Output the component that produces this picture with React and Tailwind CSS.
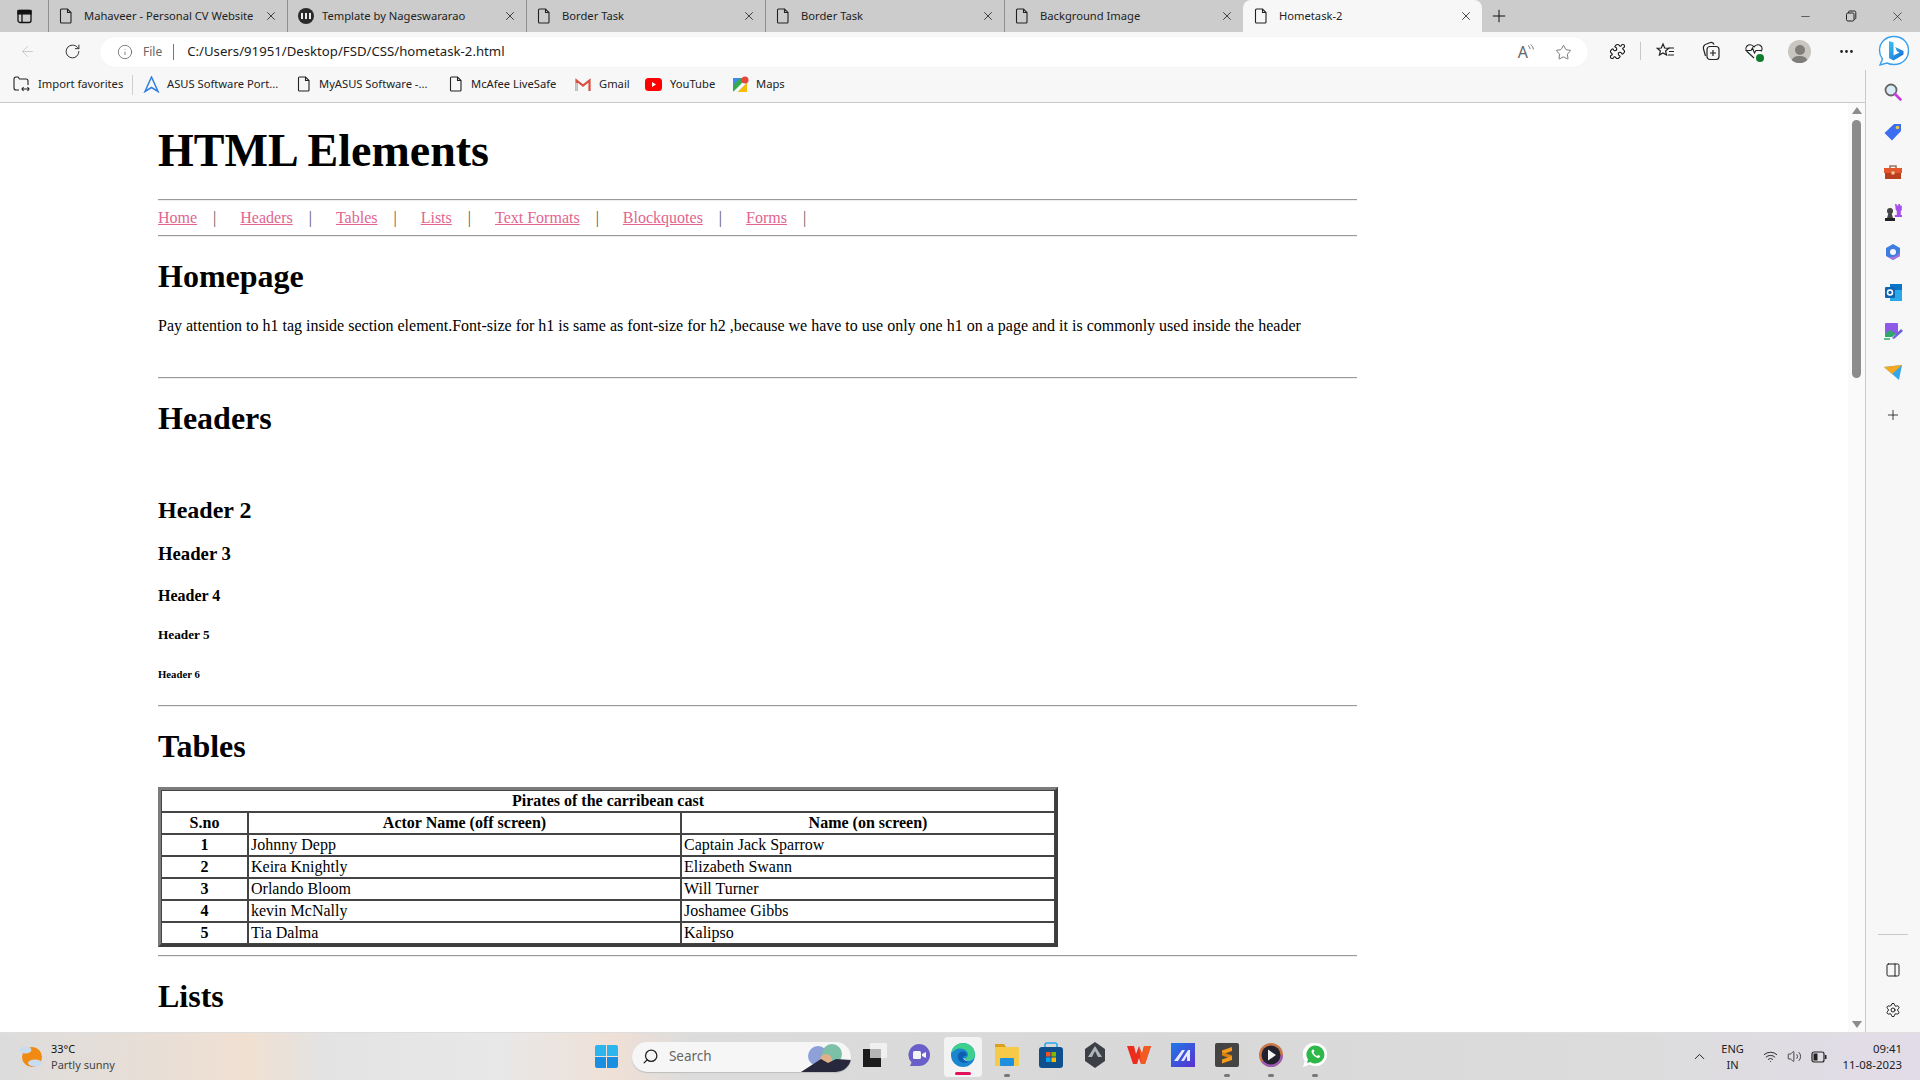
import React from "react";
import {
  ArrowLeft,
  RotateCw,
  Info,
  Star,
  Puzzle,
  Plus,
  Minus,
  X,
  Settings,
  ChevronUp,
  Wifi,
  Volume2,
  MoreHorizontal,
  Search,
  PanelRight,
} from "lucide-react";

const tabs = [
  { title: "Mahaveer - Personal CV Website", icon: "doc" },
  { title: "Template by Nageswararao", icon: "dark" },
  { title: "Border Task", icon: "doc" },
  { title: "Border Task", icon: "doc" },
  { title: "Background Image", icon: "doc" },
  { title: "Hometask-2", icon: "doc", active: true },
];

const navLinks = ["Home", "Headers", "Tables", "Lists", "Text Formats", "Blockquotes", "Forms"];

const cast = [
  ["1", "Johnny Depp", "Captain Jack Sparrow"],
  ["2", "Keira Knightly", "Elizabeth Swann"],
  ["3", "Orlando Bloom", "Will Turner"],
  ["4", "kevin McNally", "Joshamee Gibbs"],
  ["5", "Tia Dalma", "Kalipso"],
];

const DocIcon = () => (
  <svg width="14" height="16" viewBox="0 0 14 16" fill="none" stroke="#222" strokeWidth="1.1" className="shrink-0">
    <path d="M2.5 1h6l3.5 3.5V14a1 1 0 0 1-1 1H2.5a1 1 0 0 1-1-1V2a1 1 0 0 1 1-1z" />
    <path d="M8.5 1v3.5H12" />
  </svg>
);

const DarkTabIcon = () => (
  <svg width="16" height="16" viewBox="0 0 16 16" className="shrink-0">
    <circle cx="8" cy="8" r="8" fill="#2a2a2a" />
    <rect x="3" y="5" width="2" height="6" fill="#eee" />
    <rect x="7" y="5" width="2" height="6" fill="#eee" />
    <rect x="11" y="5" width="2" height="6" fill="#eee" />
  </svg>
);

const Tab = ({ title, icon, active }) => (
  <div
    className={`w-[239px] h-8 flex items-center pr-[9px] shrink-0 relative ${
      active ? "bg-[#f7f7f7] rounded-t-lg pl-[11px]" : "border-l border-[#8f8f8f] pl-[10px]"
    }`}
  >
    {icon === "doc" ? <DocIcon /> : <DarkTabIcon />}
    <span className={`flex-1 overflow-hidden whitespace-nowrap text-[11.2px] text-[#222] ${icon === "doc" ? "ml-[11px]" : "ml-[8px]"}`}>
      {title}
    </span>
    <X size={14} strokeWidth={1.4} color="#222" className="shrink-0 ml-2" />
  </div>
);

const Bookmark = ({ icon, label, className }) => (
  <div className={`flex items-center shrink-0 ${className || ""}`}>
    {icon}
    <span className="text-[11.2px] text-[#222] whitespace-nowrap">{label}</span>
  </div>
);

const Hr = ({ className }) => <hr className={`border-0 border-t border-b border-t-[#9a9a9a] border-b-[#eeeeee] ${className}`} />;

const SideIcon = ({ children }) => <div className="h-10 flex items-center justify-center">{children}</div>;

const TaskIcon = ({ children, dot, active }) => (
  <div className="relative w-[44px] h-12 flex items-center justify-center shrink-0">
    {active && <div className="absolute left-[3px] right-[3px] top-[4px] bottom-[4px] bg-[#f3f3f3] rounded" />}
    <div className="relative -mt-[3px]">{children}</div>
    {dot && <div className="absolute bottom-[4px] left-[19px] w-[6px] h-[3px] rounded-full bg-[#777]" />}
    {active && <div className="absolute bottom-[6px] left-[14px] w-[16px] h-[3px] rounded bg-[#e0125c]" />}
  </div>
);

export default function App() {
  return (
    <div className="w-[1920px] h-[1080px] overflow-hidden flex flex-col bg-white font-['Noto_Sans',sans-serif]">
      {/* tab strip */}
      <div className="h-8 bg-[#cccccc] flex items-center shrink-0">
        <div className="w-12 flex justify-center">
          <svg width="15" height="15" viewBox="0 0 15 15" fill="none" stroke="#111" strokeWidth="1.3">
            <rect x="1" y="1.5" width="13" height="12" rx="2" />
            <rect x="1" y="1.5" width="13" height="3.4" fill="#111" />
            <path d="M5 4v9" />
          </svg>
        </div>
        {tabs.map((tab, i) => (
          <Tab key={i} {...tab} />
        ))}
        <Plus size={20} strokeWidth={1.2} color="#111" className="ml-[7px]" />
        <div className="ml-auto flex items-center pr-[15px] gap-[33px]">
          <Minus size={13} strokeWidth={1.2} color="#222" />
          <svg width="12" height="12" viewBox="0 0 12 12" fill="none" stroke="#222" strokeWidth="1">
            <rect x="1.5" y="3" width="7.5" height="8" rx="1.4" />
            <path d="M3.5 3V2.2A1.2 1.2 0 0 1 4.7 1h4.6a1.5 1.5 0 0 1 1.5 1.5v5.2A1.2 1.2 0 0 1 9 9" />
          </svg>
          <X size={15} strokeWidth={1.1} color="#222" />
        </div>
      </div>

      {/* address bar */}
      <div className="h-[38px] bg-[#f7f7f7] flex items-center shrink-0 relative">
        <ArrowLeft size={17} strokeWidth={1.2} color="#c4c4c4" className="ml-[19px]" />
        <RotateCw size={17} strokeWidth={1.4} color="#333" className="ml-[28px]" />
        <div className="ml-[19px] mt-[2px] w-[1488px] h-[30px] bg-white rounded-full flex items-center shadow-[0_0_1px_#e4e4e4]">
          <Info size={16} strokeWidth={1.1} color="#555" className="ml-[17px]" />
          <span className="ml-[10px] text-[12px] text-[#666]">File</span>
          <div className="ml-[11px] w-px h-[16px] bg-[#777]" />
          <span className="ml-[13px] text-[13.2px] text-[#1c1c1c]">C:/Users/91951/Desktop/FSD/CSS/hometask-2.html</span>
          <div className="ml-auto flex items-center pr-[16px] gap-[21px]">
            <div className="flex items-start">
              <span className="text-[16px] text-[#666] leading-none">A</span>
              <svg width="7" height="9" viewBox="0 0 7 9" fill="none" stroke="#666" strokeWidth="0.9" className="-ml-[1px]">
                <path d="M1 1.500c1.500 1 2 2 2 3.500M3.500 0.500c1.800 1.200 2.800 3 2.800 5" />
              </svg>
            </div>
            <Star size={17} strokeWidth={1.1} color="#555" />
          </div>
        </div>
        <Puzzle size={17} strokeWidth={1.5} color="#111" className="ml-[21px]" />
        <div className="ml-[14px] w-px h-[18px] bg-[#c8c8c8]" />
        <div className="ml-[15px]">
          <svg width="20" height="18" viewBox="0 0 20 18" fill="none" stroke="#222" strokeWidth="1.2">
            <path d="M7 2l1.700 4 4.100.3-3.200 2.700 1 4.100L7 10.900 3.400 13.100l1-4.100-3.200-2.700 4.100-.3z" />
            <path d="M12.500 6H18M13 9.500h5M12 13h6" />
          </svg>
        </div>
        <div className="ml-[25px]">
          <svg width="20" height="20" viewBox="0 0 20 20" fill="none" stroke="#222" strokeWidth="1.2">
            <rect x="6" y="5.500" width="12" height="13" rx="3" />
            <path d="M4.500 15L2.500 8a4 4 0 0 1 3-5l4-1.500A3 3 0 0 1 13 3.500M12 9v6M9 12h6" />
          </svg>
        </div>
        <div className="ml-[23px] relative">
          <svg width="20" height="18" viewBox="0 0 20 18" fill="none" stroke="#222" strokeWidth="1.1">
            <path d="M10 16L3 9.500a4 4 0 0 1 6-5.500l1 1 1-1a4 4 0 0 1 6 5.500" />
            <path d="M1.500 8.500H7l1.500-2.500 2 5 1.500-2.500h5" />
          </svg>
          <div className="absolute right-[0px] bottom-[-2px] w-[8px] h-[8px] rounded-full bg-[#0f7b2f]" />
        </div>
        <div className="ml-[24px] w-[23px] h-[23px] rounded-full bg-[#c9c6c2] flex flex-col items-center justify-end overflow-hidden">
          <div className="w-[10px] h-[10px] rounded-full bg-[#7f7d7a]" />
          <div className="mt-[1px] w-[17px] h-[7px] rounded-t-full bg-[#7f7d7a]" />
        </div>
        <MoreHorizontal size={17} strokeWidth={2} color="#222" className="ml-[27px]" />
        <div className="ml-[23px]">
          <svg width="32" height="32" viewBox="0 0 32 32">
            <defs>
              <linearGradient id="bingGrad" x1="0" y1="0" x2="1" y2="1">
                <stop offset="0" stopColor="#39c4f5" />
                <stop offset="1" stopColor="#1565d8" />
              </linearGradient>
            </defs>
            <path d="M16 1.500c8.500 0 14.500 6 14.500 14s-6 14-14.500 14c-2.500 0-5-.5-7-1.500L2 30l2.500-6C2.500 21.500 1.500 19 1.500 15.500c0-8 6-14 14.500-14z" fill="#fff" stroke="#3aa0ee" strokeWidth="1.400" />
            <path d="M11 6l4.500 1.500v13l6-3-2.500-1.200-1.800-4.300 8.300 4v3.500L15.500 25.500 11 23z" fill="url(#bingGrad)" />
          </svg>
        </div>
      </div>

      <div className="flex-1 min-h-0 flex">
        <div className="flex-1 min-w-0 flex flex-col">
          {/* favourites bar */}
          <div className="h-[33px] bg-[#f7f7f7] border-b border-[#c9c9c9] flex items-center pl-[13px] pb-[3px] shrink-0">
            <Bookmark
              label="Import favorites"
              className="w-[119px] gap-[8px]"
              icon={
                <svg width="17" height="16" viewBox="0 0 17 16" fill="none" stroke="#222" strokeWidth="1.1">
                  <path d="M6 14H3a2 2 0 0 1-2-2V3a2 2 0 0 1 2-2h2l1.500 2H13a2 2 0 0 1 2 2v4" />
                  <path d="M9 13h7M10.500 11L9 13l1.500 2M14.500 11l1.500 2-1.500 2" />
                </svg>
              }
            />
            <div className="w-px h-[20px] bg-[#cfcfcf] mr-[10px]" />
            <Bookmark
              label="ASUS Software Port..."
              className="w-[154px] gap-[7px]"
              icon={
                <svg width="17" height="17" viewBox="0 0 17 17" fill="none" stroke="#2f80e0" strokeWidth="1.5">
                  <path d="M8.500 1L2 15.500l6.500-4 6.500 4z" />
                </svg>
              }
            />
            <Bookmark label="MyASUS Software -..." className="w-[152px] gap-[8px]" icon={<DocIcon />} />
            <Bookmark label="McAfee LiveSafe" className="w-[126px] gap-[8px]" icon={<DocIcon />} />
            <Bookmark
              label="Gmail"
              className="w-[70px] gap-[8px]"
              icon={
                <svg width="16" height="13" viewBox="0 0 16 13" fill="none" strokeWidth="2.2">
                  <path d="M1.500 13V2.500L8 7.500l6.500-5V13" stroke="#d8503f" />
                  <path d="M1.500 13V5" stroke="#c9c9c9" />
                </svg>
              }
            />
            <Bookmark
              label="YouTube"
              className="w-[88px] gap-[8px]"
              icon={
                <svg width="17" height="13" viewBox="0 0 17 13">
                  <rect width="17" height="13" rx="3.500" fill="#f00" />
                  <path d="M7 4l4 2.500L7 9z" fill="#fff" />
                </svg>
              }
            />
            <Bookmark
              label="Maps"
              className="gap-[7px]"
              icon={
                <svg width="16" height="16" viewBox="0 0 16 16">
                  <rect y="2" width="14" height="14" rx="1.500" fill="#35a853" />
                  <path d="M0 16L14 2v5L5 16z" fill="#f7f7f7" />
                  <path d="M0 2h7L0 9z" fill="#4285f4" />
                  <path d="M5 16l9-9v9z" fill="#fbbc04" />
                  <circle cx="12" cy="4" r="3.500" fill="#e8453c" />
                </svg>
              }
            />
          </div>

          <div className="flex-1 min-h-0 flex">
            {/* page */}
            <div className="flex-1 min-w-0 overflow-hidden bg-white pl-[158px] font-['Liberation_Serif',serif] text-black text-[16px]">
              <div className="w-[1199px]">
                <h1 className="mt-[20px] text-[46px] leading-[55px] font-bold">HTML Elements</h1>
                <Hr className="mt-[21px]" />
                <div className="mt-[8px] flex h-[18px] leading-[18px]">
                  {navLinks.map((link) => (
                    <div key={link} className="flex">
                      <a className="text-[#e2648f] underline">{link}</a>
                      <span className="ml-[16px] mr-[24px] text-[#555]">|</span>
                    </div>
                  ))}
                </div>
                <Hr className="mt-[8px]" />
                <h2 className="mt-[21px] text-[32px] leading-[37px] font-bold">Homepage</h2>
                <p className="mt-[22px] leading-[18px]">
                  Pay attention to h1 tag inside section element.Font-size for h1 is same as font-size for h2 ,because we have to use only one h1 on a page and it is commonly used inside the header
                </p>
                <Hr className="mt-[42px]" />
                <h2 className="mt-[21px] text-[32px] leading-[37px] font-bold">Headers</h2>
                <h2 className="mt-[59px] text-[24px] leading-[28px] font-bold">Header 2</h2>
                <h3 className="mt-[19px] text-[18.72px] leading-[21px] font-bold">Header 3</h3>
                <h4 className="mt-[23px] text-[16px] leading-[18px] font-bold">Header 4</h4>
                <h5 className="mt-[22px] text-[13.28px] leading-[15px] font-bold">Header 5</h5>
                <h6 className="mt-[26px] text-[10.72px] leading-[12px] font-bold">Header 6</h6>
                <Hr className="mt-[25px]" />
                <h2 className="mt-[21px] text-[32px] leading-[37px] font-bold">Tables</h2>
                <div className="mt-[22px] w-[900px] border-[3px] border-t-[#7c7c7c] border-l-[#7c7c7c] border-r-[#3d3d3d] border-b-[#3d3d3d]">
                  <table className="w-full table-fixed border-separate border-spacing-0 border border-[#444] leading-[18px]">
                    <colgroup>
                      <col className="w-[87px]" />
                      <col className="w-[433px]" />
                      <col />
                    </colgroup>
                    <tbody>
                      <tr>
                        <th colSpan={3} className="p-px border-b-2 border-[#444] font-bold text-center">
                          Pirates of the carribean cast
                        </th>
                      </tr>
                      <tr>
                        <th className="p-px border-b-2 border-r-2 border-[#444]">S.no</th>
                        <th className="p-px border-b-2 border-r-2 border-[#444]">Actor Name (off screen)</th>
                        <th className="p-px border-b-2 border-[#444]">Name (on screen)</th>
                      </tr>
                      {cast.map((row, i) => {
                        const bottom = i < cast.length - 1 ? "border-b-2" : "";
                        return (
                          <tr key={row[0]}>
                            <th className={`p-px border-r-2 border-[#444] ${bottom}`}>{row[0]}</th>
                            <td className={`py-px pl-[2px] pr-px border-r-2 border-[#444] ${bottom}`}>{row[1]}</td>
                            <td className={`py-px pl-[2px] pr-px border-[#444] ${bottom}`}>{row[2]}</td>
                          </tr>
                        );
                      })}
                    </tbody>
                  </table>
                </div>
                <Hr className="mt-[8px]" />
                <h2 className="mt-[21px] text-[32px] leading-[37px] font-bold">Lists</h2>
              </div>
            </div>
            {/* scrollbar */}
            <div className="w-[17px] bg-[#fafafa] flex flex-col items-center shrink-0 pt-[4px] pb-[4px]">
              <div className="w-0 h-0 border-x-[5px] border-x-transparent border-b-[7px] border-b-[#8c8c8c]" />
              <div className="mt-[6px] w-[9px] h-[258px] rounded-full bg-[#8c8c8c]" />
              <div className="mt-auto w-0 h-0 border-x-[5px] border-x-transparent border-t-[7px] border-t-[#8c8c8c]" />
            </div>
          </div>
        </div>

        {/* sidebar */}
        <div className="w-[55px] bg-[#f7f7f7] border-l border-[#c9c9c9] flex flex-col items-center shrink-0 pt-[2px] pb-[2px]">
          <SideIcon>
            <svg width="18" height="18" viewBox="0 0 18 18" fill="none">
              <circle cx="7" cy="7" r="5.500" fill="#d6ecf7" stroke="#666" strokeWidth="1.800" />
              <path d="M11 11l5.500 5.500" stroke="#c83bd8" strokeWidth="2.600" strokeLinecap="round" />
            </svg>
          </SideIcon>
          <SideIcon>
            <svg width="18" height="18" viewBox="0 0 18 18">
              <path d="M10 1h7v7l-9 9.500L.5 10z" fill="#3b6ff0" />
              <circle cx="13.500" cy="4.500" r="1.800" fill="#f3c63a" />
            </svg>
          </SideIcon>
          <SideIcon>
            <svg width="18" height="16" viewBox="0 0 18 16">
              <path d="M6 4V2h6v2" fill="none" stroke="#a0705a" strokeWidth="1.600" />
              <rect y="4" width="18" height="5" fill="#e2572b" />
              <rect x="1" y="9" width="16" height="6" fill="#b8401c" />
              <rect x="7.500" y="7.500" width="3" height="3" fill="#f3c9a8" />
            </svg>
          </SideIcon>
          <SideIcon>
            <svg width="18" height="18" viewBox="0 0 18 18">
              <circle cx="6" cy="8" r="3" fill="#444" />
              <path d="M4.500 10h3l1.500 5H3z" fill="#444" />
              <rect x="1" y="15" width="10" height="3" fill="#222" />
              <path d="M11 1h1.700v1.500h1.600V1H16v1.500h1.800V1v6l-1 1v4h2v2h-8v-2h2V8l-1-1z" fill="#a84ef0" />
            </svg>
          </SideIcon>
          <SideIcon>
            <svg width="18" height="18" viewBox="0 0 18 18" fill="none">
              <path d="M9 1l7 4v8l-7 4-7-4V5z" fill="#3f7ee0" />
              <path d="M16 9v4l-7 4-5-3c5 1 10-1 12-5z" fill="#b070e0" />
              <circle cx="9" cy="9" r="3" fill="#f7f7f7" />
            </svg>
          </SideIcon>
          <SideIcon>
            <svg width="17" height="17" viewBox="0 0 17 17">
              <rect x="5" y="0" width="12" height="17" fill="#28a8ea" />
              <rect x="5" y="0" width="12" height="6" fill="#0a74c9" />
              <rect x="0" y="3" width="10" height="11" rx="1" fill="#0f63b5" />
              <circle cx="5" cy="8.500" r="2.500" fill="none" stroke="#fff" strokeWidth="1.500" />
            </svg>
          </SideIcon>
          <SideIcon>
            <svg width="19" height="18" viewBox="0 0 19 18">
              <rect x="1" y="0" width="13" height="11" rx="1" fill="#8e5be8" />
              <path d="M1 11l5-4 6 4-4 3H1z" fill="#2fa86b" />
              <path d="M8 15l9-9 2 2-9 8z" fill="#6a5fe0" />
              <path d="M0 16h6" stroke="#2fa86b" strokeWidth="1.500" />
            </svg>
          </SideIcon>
          <SideIcon>
            <svg width="18" height="15" viewBox="0 0 18 15">
              <path d="M0 2l18-2-3 15-7-6z" fill="#34a7e8" />
              <path d="M0 2l18-2L8 9z" fill="#f7a81e" />
            </svg>
          </SideIcon>
          <div className="mt-[3px]">
            <SideIcon>
              <Plus size={16} strokeWidth={1.2} color="#111" />
            </SideIcon>
          </div>
          <div className="mt-auto w-[30px] h-px bg-[#c9c9c9]" />
          <div className="mt-[15px]">
            <SideIcon>
              <PanelRight size={16} strokeWidth={1.4} color="#111" />
            </SideIcon>
          </div>
          <SideIcon>
            <Settings size={16} strokeWidth={1.4} color="#111" />
          </SideIcon>
        </div>
      </div>

      {/* taskbar */}
      <div className="h-12 shrink-0 relative flex items-center border-t border-[#dedede] bg-[linear-gradient(90deg,#dcdcdc_0%,#f0e0d2_13%,#e3e3e3_17%,#e8e8e8_26%,#efe0d6_32%,#dcdcdc_36%,#d8d8d8_60%,#dcdcdc_85%,#e2dce8_100%)]">
        <div className="ml-[19px] w-[24px]">
          <svg width="24" height="26" viewBox="0 0 24 26">
            <circle cx="13" cy="13" r="10" fill="#f08a12" />
            <ellipse cx="6.500" cy="6" rx="6" ry="3.500" fill="#c9dbee" />
            <ellipse cx="16" cy="19" rx="7" ry="3.500" fill="#c9dbee" />
          </svg>
        </div>
        <div className="ml-[8px] text-[11px] leading-[16px] text-[#111]">
          <div>33°C</div>
          <div className="text-[#444]">Partly sunny</div>
        </div>
        <div className="ml-[480px] grid grid-cols-2 gap-px w-[23px] h-[23px] shrink-0">
          <div className="bg-[#2bb4ee] rounded-tl-[2px]" />
          <div className="bg-[#2bb4ee] rounded-tr-[2px]" />
          <div className="bg-[#1a8ee0] rounded-bl-[2px]" />
          <div className="bg-[#1a8ee0] rounded-br-[2px]" />
        </div>
        <div className="ml-[14px] w-[219px] h-[30px] bg-[#f6f6f6] rounded-full flex items-center overflow-hidden shrink-0 relative shadow-[0_1px_1px_#bdbdbd]">
          <Search size={17} strokeWidth={1.8} color="#222" className="ml-[10px] -scale-x-100" />
          <span className="ml-[10px] text-[13.5px] text-[#666]">Search</span>
          <div className="absolute right-0 bottom-0">
            <svg width="52" height="30" viewBox="0 0 52 30">
              <circle cx="19" cy="14" r="10" fill="#8da0d8" />
              <circle cx="33" cy="12" r="10" fill="#7cc0a8" />
              <circle cx="27" cy="18" r="6" fill="#e0b088" />
              <path d="M2 30L22 17l7 4 8-4 15 1v12z" fill="#28283c" />
            </svg>
          </div>
        </div>
        <div className="ml-[2px] flex items-center">
          <TaskIcon>
            <svg width="24" height="24" viewBox="0 0 24 24">
              <rect x="7" y="0" width="17" height="15" rx="1" fill="#f0f0f0" />
              <rect x="0" y="6" width="18" height="18" fill="#1c1c1c" />
              <rect x="7" y="6" width="11" height="9" fill="#b5b5b5" />
            </svg>
          </TaskIcon>
          <TaskIcon>
            <svg width="24" height="24" viewBox="0 0 24 24">
              <path d="M12 1a11 11 0 0 1 0 22H3l1.500-3.500A11 11 0 0 1 12 1z" fill="#6a5fc8" />
              <rect x="6" y="8" width="8" height="8" rx="1.500" fill="#f3f3f3" />
              <path d="M15 11l4-2v6l-4-2z" fill="#f3f3f3" />
            </svg>
          </TaskIcon>
          <TaskIcon active>
            <svg width="24" height="24" viewBox="0 0 24 24">
              <circle cx="12" cy="12" r="12" fill="#1a86d0" />
              <path d="M12 0a12 12 0 0 1 12 12c0 3-3 5.500-6 5.500-2 0-4-1-4.500-2 2-.5 3.500-2 3.500-4 0-3-3.500-6-8-6-3.500 0-7 2-9 5C1.500 4.500 6 0 12 0z" fill="#3dd08c" />
              <path d="M7 15c-1-4 2-7 5.500-6.500 3 .5 3.500 3 2.500 4.500-1.500-.5-3 .5-3 2s2 3.500 6 3.500c-3 2-10 2-11-3.500z" fill="#0d5fb0" />
              <path d="M12.500 15c0 2 2.500 3.500 6 2.500 2-.5 3.500-2 4-3.500-1 2-3 3.500-5.500 3.500-2 0-3.500-1-4-2.500z" fill="#e8f4f8" />
            </svg>
          </TaskIcon>
          <TaskIcon dot>
            <svg width="24" height="22" viewBox="0 0 24 22">
              <path d="M0 1a1 1 0 0 1 1-1h8l2 3H24v19H0z" fill="#f7c948" />
              <path d="M0 0h9l2 3H0z" fill="#d9a020" />
              <rect x="5" y="14" width="14" height="8" rx="1" fill="#1f8fe0" />
            </svg>
          </TaskIcon>
          <TaskIcon>
            <svg width="24" height="26" viewBox="0 0 24 26">
              <path d="M6 6V3a2 2 0 0 1 2-2h8a2 2 0 0 1 2 2v3" fill="none" stroke="#28a8ea" strokeWidth="1.600" />
              <rect y="5" width="24" height="21" rx="3" fill="#0e4f8c" />
              <rect x="7" y="10" width="4.500" height="4.500" fill="#f25022" />
              <rect x="12.500" y="10" width="4.500" height="4.500" fill="#7fba00" />
              <rect x="7" y="15.500" width="4.500" height="4.500" fill="#00a4ef" />
              <rect x="12.500" y="15.500" width="4.500" height="4.500" fill="#ffb900" />
            </svg>
          </TaskIcon>
          <TaskIcon>
            <svg width="22" height="26" viewBox="0 0 22 26">
              <path d="M11 0l10 7v12l-10 7-10-7V7z" fill="#3c4046" />
              <path d="M11 4l7 11H4z" fill="#aeb3b8" />
              <path d="M11 9l3 6H8z" fill="#3c4046" />
            </svg>
          </TaskIcon>
          <TaskIcon>
            <svg width="24" height="20" viewBox="0 0 24 20">
              <path d="M0 1h7l2 8 3-8 3 8 2-8h7l-6 18h-4l-2-6-2 6H6z" fill="#ec2d1e" />
              <path d="M12 1l3 8 2-8h7l-6 18h-4z" fill="#f25a22" />
            </svg>
          </TaskIcon>
          <TaskIcon>
            <svg width="24" height="24" viewBox="0 0 24 24">
              <defs>
                <linearGradient id="midGrad" x1="0" y1="0" x2="1" y2="1">
                  <stop offset="0" stopColor="#1e7ae8" />
                  <stop offset="1" stopColor="#5a2fd0" />
                </linearGradient>
              </defs>
              <rect width="24" height="24" fill="url(#midGrad)" />
              <path d="M3 18L11 7h3L7 18zM10 18l7-11h2v11h-3v-5l-3 5z" fill="#e8e8ff" />
            </svg>
          </TaskIcon>
          <TaskIcon dot>
            <svg width="24" height="24" viewBox="0 0 24 24">
              <rect width="24" height="24" rx="2" fill="#444442" />
              <path d="M17 4v4L7 11.500v-4z" fill="#f59a1d" />
              <path d="M7 9l10 3.500v3.500L7 12.500z" fill="#d9820f" />
              <path d="M17 13v4L7 20.500v-4z" fill="#f59a1d" />
            </svg>
          </TaskIcon>
          <TaskIcon dot>
            <svg width="24" height="24" viewBox="0 0 24 24">
              <circle cx="12" cy="12" r="12" fill="#c8764a" />
              <path d="M24 12a12 12 0 0 1-22 6.500z" fill="#9a58b8" />
              <circle cx="12" cy="12" r="9.500" fill="#22222e" />
              <path d="M9 6.500l8 5.500-8 5.500z" fill="#f3f3f3" />
            </svg>
          </TaskIcon>
          <TaskIcon dot>
            <svg width="24" height="24" viewBox="0 0 24 24">
              <path d="M12.500 0a11.500 11.500 0 0 1 0 23c-2 0-4-.5-6-1.500L0 24l1.800-6A11.500 11.500 0 0 1 12.500 0z" fill="#fff" />
              <path d="M12.500 2.500a9 9 0 0 1 0 18c-2 0-3.500-.5-5-1.500l-3.500 1 1-3.500a9 9 0 0 1 7.500-14z" fill="#2fb84a" />
              <path d="M9 7c1-1 2-.5 2.500 1l-1 1.500c.5 1.500 2 3 3.500 3.500l1.500-1c1.500.5 2 1.500 1 2.500-2 2-10-4-7.500-7.500z" fill="#fff" />
            </svg>
          </TaskIcon>
        </div>
        <div className="ml-auto flex items-center pr-[18px] text-[#222]">
          <ChevronUp size={17} strokeWidth={1.4} />
          <div className="ml-[7px] w-[36px] text-center text-[11px] leading-[16px]">
            <div>ENG</div>
            <div>IN</div>
          </div>
          <Wifi size={15} strokeWidth={1.5} className="ml-[12px]" />
          <Volume2 size={15} strokeWidth={1.3} className="ml-[9px]" />
          <svg width="16" height="12" viewBox="0 0 16 12" fill="none" className="ml-[9px]">
            <rect x="1" y="1" width="12" height="10" rx="2" stroke="#222" strokeWidth="1.200" />
            <rect x="2.500" y="2.500" width="4" height="7" fill="#222" />
            <rect x="14" y="4" width="1.500" height="4" fill="#222" />
          </svg>
          <div className="ml-[16px] text-right text-[11.4px] leading-[16px]">
            <div>09:41</div>
            <div>11-08-2023</div>
          </div>
        </div>
      </div>
    </div>
  );
}
